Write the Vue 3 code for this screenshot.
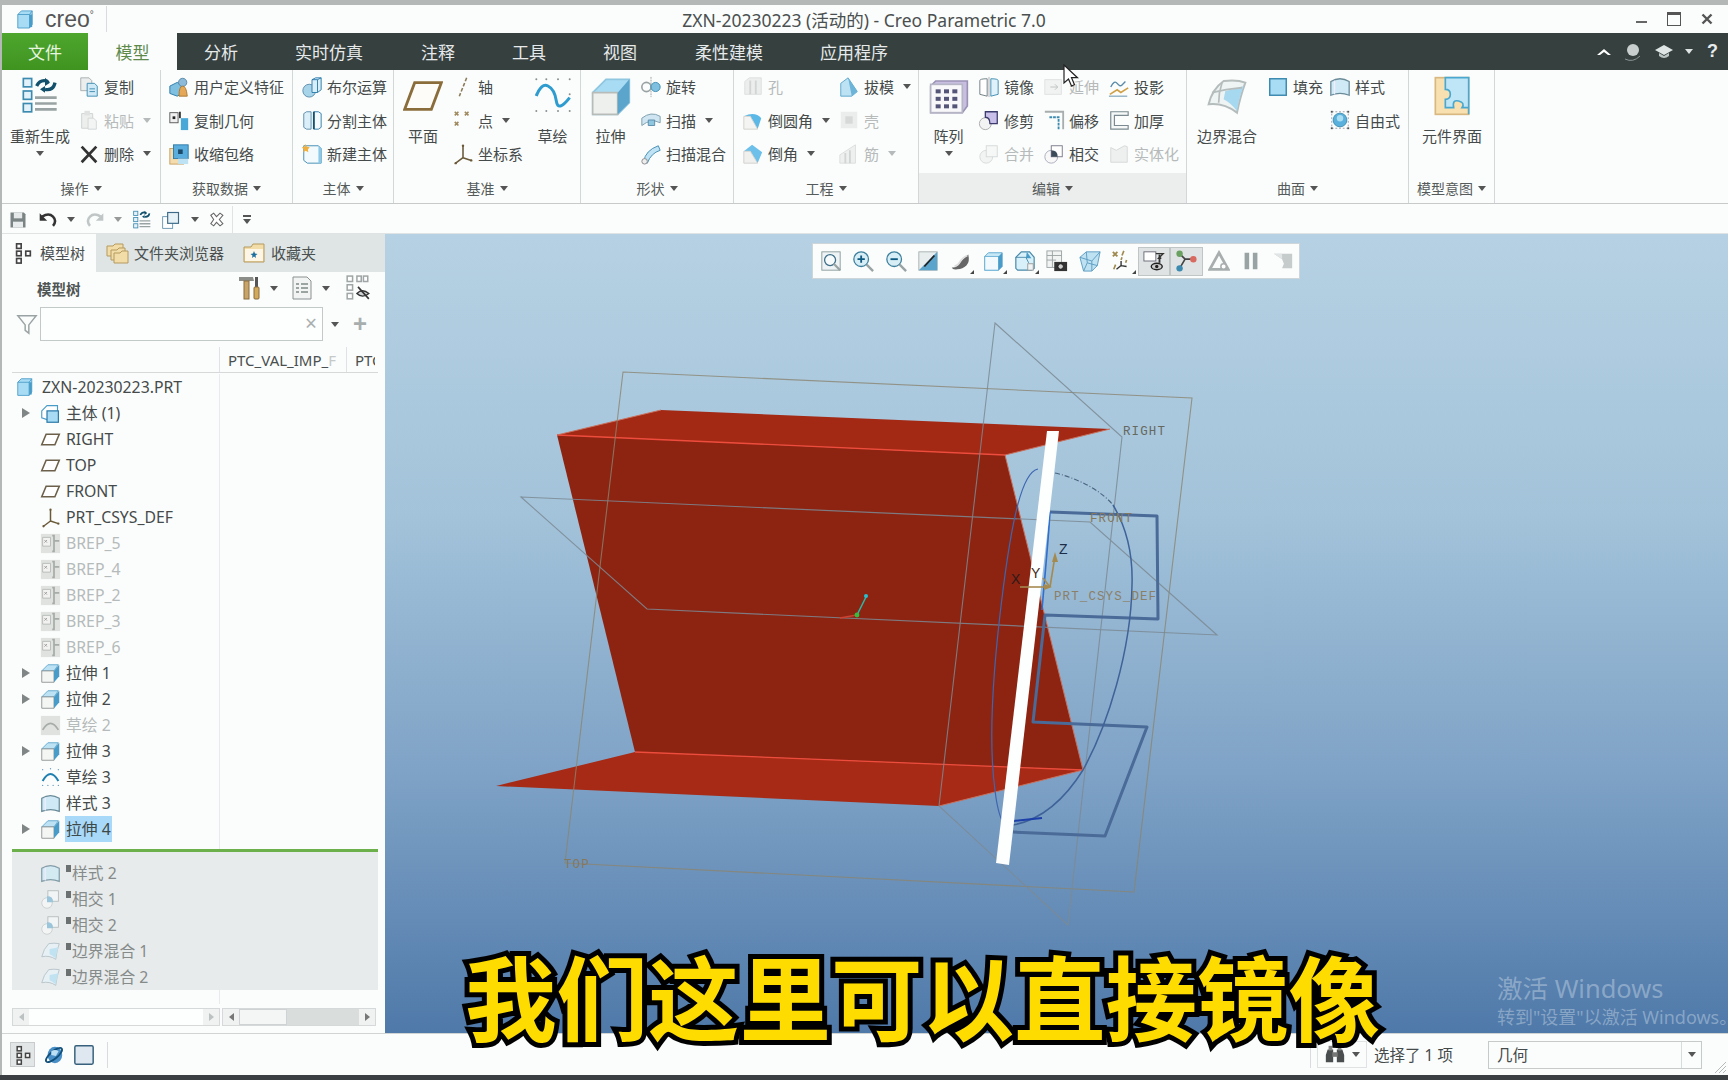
<template>
  <div class="window">
    <!-- title bar -->
    <div class="titlebar">
      <div class="logo">
        <svg class="logo-mark" viewBox="0 0 20 22" v-html="ic.part"></svg>
        <span class="logo-text">creo<sup>°</sup></span>
      </div>
      <div class="title">ZXN-20230223 (活动的) - Creo Parametric 7.0</div>
      <div class="winbtns">
        <span class="win-min"></span>
        <span class="win-max"></span>
        <svg class="win-close" viewBox="0 0 12 12"><path d="M1.5 1.5l9 9M10.5 1.5l-9 9" stroke="#555" stroke-width="2.4" /></svg>
      </div>
    </div>

    <!-- menu -->
    <div class="menubar">
      <div class="menu-file">文件</div>
      <div class="menu-active">模型</div>
      <div v-for="m in menus" :key="m.t" class="menu-item" :style="{ width: m.w + 'px' }">{{ m.t }}</div>
      <div class="menu-right">
        <svg width="16" height="10" viewBox="0 0 16 10"><path d="M1 8l7-6 7 6-3 0-4-3-4 3z" fill="#fff" /></svg>
        <svg width="20" height="22" viewBox="0 0 20 22"><circle cx="10" cy="9" r="6" fill="#c9cfcf" /><path d="M2 18q8 4 15-3" stroke="#8b9494" fill="none" /></svg>
        <svg width="20" height="16" viewBox="0 0 20 16"><path d="M10 1L19 6l-9 5-9-5z" fill="#dfe4e4" /><path d="M5 9v3q5 4 10 0V9l-5 3z" fill="#bcc4c4" /></svg>
        <i class="caret light"></i>
        <span class="help">?</span>
      </div>
    </div>

    <!-- ribbon -->
    <div class="ribbon">
      <div v-for="g in groups" :key="g.label" class="group" :class="{ shaded: g.shaded }" :style="{ width: g.w + 'px' }">
        <div class="group-body" :style="{ paddingLeft: (g.pl || 0) + 'px' }">
          <div v-for="(c, i) in g.cols" :key="i" class="col" :style="{ width: c.w + 'px' }">
            <div v-if="c.big" class="big">
              <svg class="big-icon" viewBox="0 0 24 24" v-html="ic[c.icon]"></svg>
              <span class="big-label">{{ c.big }}</span>
              <i v-if="c.arrow" class="caret big-caret"></i>
            </div>
            <template v-else>
              <div v-for="it in c.items" :key="it.t" class="small" :class="{ off: it.off }">
                <svg class="small-icon" viewBox="0 0 24 24" v-html="ic[it.icon]"></svg>
                <span>{{ it.t }}</span>
                <i v-if="it.arrow" class="caret small-caret"></i>
              </div>
            </template>
          </div>
        </div>
        <div class="group-foot">{{ g.label }}<i class="caret foot-caret"></i></div>
      </div>
    </div>

    <!-- quick access -->
    <div class="quick">
      <svg class="q-icon" viewBox="0 0 24 24" v-html="ic.save"></svg>
      <svg class="q-icon" viewBox="0 0 24 24" v-html="ic.undo"></svg>
      <i class="caret q-caret"></i>
      <svg class="q-icon faded" viewBox="0 0 24 24" v-html="ic.redo"></svg>
      <i class="caret q-caret faded"></i>
      <svg class="q-icon" viewBox="0 0 24 24" v-html="ic.regen"></svg>
      <svg class="q-icon" viewBox="0 0 24 24" v-html="ic.windows"></svg>
      <i class="caret q-caret"></i>
      <svg class="q-icon q-small" viewBox="0 0 24 24" v-html="ic.closewin"></svg>
      <span class="q-sep"></span>
      <span class="q-more"><i class="caret"></i></span>
    </div>

    <div class="main">
      <!-- model tree panel -->
      <aside class="panel">
        <div class="tabs">
          <div class="tab on"><svg viewBox="0 0 24 24" v-html="ic.tree"></svg>模型树</div>
          <div class="tab"><svg viewBox="0 0 24 24" v-html="ic.folders"></svg>文件夹浏览器</div>
          <div class="tab"><svg viewBox="0 0 24 24" v-html="ic.fav"></svg>收藏夹</div>
        </div>
        <div class="tree-head">
          <b>模型树</b>
          <svg class="th-a" viewBox="0 0 24 24" v-html="ic.tools"></svg>
          <i class="caret"></i>
          <svg class="th-b" viewBox="0 0 24 24" v-html="ic.list"></svg>
          <i class="caret"></i>
          <svg class="th-c" viewBox="0 0 24 24" v-html="ic.treehide"></svg>
        </div>
        <div class="filter">
          <svg viewBox="0 0 24 24"><path d="M2 3h20l-8 10v9l-4-3v-6z" fill="none" stroke="#9aa3a3" stroke-width="1.6" /></svg>
          <div class="filter-input"><span>×</span></div>
          <i class="caret"></i>
          <span class="plus">+</span>
        </div>
        <div class="thead">
          <div class="th-first"></div>
          <div class="th-col">PTC_VAL_IMP_<em>F</em></div>
          <div class="th-col last">PTC</div>
        </div>
        <div class="rows">
          <div v-for="r in rows" :key="r.t" class="row" :class="{ dim: r.dim, root: r.root }">
            <span class="expander"><i v-if="r.arrow"></i></span>
            <svg class="row-icon" viewBox="0 0 24 24" v-html="ic[r.icon]"></svg>
            <span class="row-text" :class="{ sel: r.sel }">{{ r.t }}</span>
          </div>
          <div class="greenline"></div>
          <div class="below">
            <div v-for="r in belowRows" :key="r.t" class="row">
              <span class="expander"></span>
              <svg class="row-icon ghost-soft" viewBox="0 0 24 24" v-html="ic[r.icon]"></svg>
              <i class="marker"></i>
              <span class="row-text">{{ r.t }}</span>
            </div>
          </div>
        </div>
        <div class="scrolls">
          <div class="sb sb-a"><span class="sb-btn"><i class="tri-l"></i></span><span class="sb-fill"></span><span class="sb-btn"><i class="tri-r"></i></span></div>
          <div class="sb sb-b"><span class="sb-btn"><i class="tri-l dark"></i></span><span class="sb-thumb"></span><span class="sb-fill gray"></span><span class="sb-btn"><i class="tri-r dark"></i></span></div>
        </div>
      </aside>

      <!-- graphics area -->
      <section class="viewport">
        <svg class="scene" viewBox="385 234 1343 799" preserveAspectRatio="none">
          <polygon points="557,435 661,410 1110,429 1005,455" fill="#a32915" />
          <polygon points="557,435 1005,455 1083,770 635,752" fill="#8d2412" />
          <polygon points="496,786 635,752 1083,770 939,806" fill="#a62a15" />
          <path d="M557 435L1005 455M635 752L1083 770" stroke="#ee4c3c" stroke-width="1.3" />
          <path d="M1005 455L1083 770L939 806M557 435L661 410M1110 429L1005 455" stroke="#c8705e" stroke-width="1" fill="none" />

          <g fill="none" stroke="#8a8471" stroke-width="1.1" opacity=".8">
            <polygon points="623,372 1192,398 1134,892 565,863" />
          </g>
          <g fill="none" stroke="#7c8a94" stroke-width="1.1" opacity=".85">
            <polygon points="995,323 1122,437 1068,925 939,806" />
            <polygon points="521,497 1090,522 1217,635 647,609" />
          </g>

          <g fill="none" stroke="#4a6a98" stroke-width="3" stroke-linejoin="round">
            <path d="M1050 512L1157 516L1158 619L1045 615L1033 722L1147 727L1105 836L1013 832" />
          </g>
          <path d="M1038 469C1022 472 1012 520 1003 590C994 660 988 740 995 790C997 808 1000 818 1004 824" fill="none" stroke="#3e66b0" stroke-width="1.2" />
          <path d="M1050 512C1048 545 1044 585 1042 610" fill="none" stroke="#2f6fd0" stroke-width="1.6" />
          <path d="M1055 473C1085 480 1105 495 1113 505" fill="none" stroke="#4a6480" stroke-width="1.1" stroke-dasharray="5 2 1 2" />
          <path d="M1113 505C1128 530 1133 555 1132 585C1131 650 1108 725 1083 770C1063 802 1040 820 1013 825" fill="none" stroke="#3f6298" stroke-width="1.5" />
          <path d="M1013 821L1042 818" stroke="#1c3fa8" stroke-width="2" />

          <polygon points="1047,431 1059,431 1009,865 996,863" fill="#fdfefe" />

          <g stroke="#a58a50" stroke-width="1.6" fill="none">
            <path d="M1050 587L1055 556" />
            <path d="M1050 587L1020 587" />
            <path d="M1050 587L1043 578" />
          </g>
          <path d="M1055 552l-3 10h6z" fill="#a58a50" />
          <path d="M1052 587l-8 -3v6z" fill="#a58a50" />

          <path d="M857 615L866 597" stroke="#2bb8a8" stroke-width="1.6" />
          <circle cx="866" cy="596" r="2" fill="#28c0d0" />
          <path d="M857 615L840 618" stroke="#d04030" stroke-width="1.6" />
          <circle cx="857" cy="615" r="2.4" fill="#2fc040" />

          <g class="datum-label">
            <text x="1123" y="435" fill="#66695f">RIGHT</text>
            <text x="1090" y="522" fill="#86785c">FRONT</text>
            <text x="1054" y="600" fill="#8a7f68">PRT_CSYS_DEF</text>
            <text x="564" y="868" fill="#86785c">TOP</text>
          </g>
          <g class="axis-label">
            <text x="1059" y="554" fill="#1d2d48">Z</text>
            <text x="1031" y="578" fill="#3d2a20">Y</text>
            <text x="1011" y="584" fill="#2d1a18">X</text>
          </g>
        </svg>

        <div class="float-bar">
          <div v-for="(b, i) in floatBtns" :key="i" class="fb" :class="{ pressed: b.on, corner: b.corner }">
            <svg viewBox="0 0 24 24" v-html="ic[b.icon]"></svg>
          </div>
        </div>

        <div class="watermark">
          <div class="wm-a">激活 Windows</div>
          <div class="wm-b">转到"设置"以激活 Windows。</div>
        </div>
      </section>
    </div>

    <!-- status bar -->
    <div class="status">
      <div class="st-left">
        <span class="st-toggle"><svg viewBox="0 0 24 24" v-html="ic.tree"></svg></span>
        <svg class="st-icon" viewBox="0 0 24 24" v-html="ic.globe"></svg>
        <svg class="st-icon" viewBox="0 0 24 24" v-html="ic.square"></svg>
        <span class="st-sep"></span>
      </div>
      <div class="st-right">
        <span class="st-sep"></span>
        <span class="st-find">
          <svg viewBox="0 0 24 24" v-html="ic.binoc"></svg>
          <i class="caret"></i>
        </span>
        <span class="st-text">选择了 1 项</span>
        <div class="st-select"><span>几何</span><b><i class="caret"></i></b></div>
        <svg class="grip" viewBox="0 0 12 12"><path d="M1 12L12 1M5 12l7-7M9 12l3-3" stroke="#b5baba" /></svg>
      </div>
    </div>

    <div class="bottom-edge"></div>

    <!-- overlays -->
    <div class="subtitle">我们这里可以直接镜像</div>
    <svg class="cursor" viewBox="0 0 16 24"><path d="M1 1v18l4.5-4 3 7 3-1.300-3-7h6z" fill="#fff" stroke="#222" stroke-width="1.200" /></svg>
  </div>
</template>

<script setup>
const ic = {
  part: '<path d="M2 6l4-4h12v15l-3 4H2z" fill="#a8dcf4" stroke="#4a9cc8"/><path d="M15 21V6l3-4M2 6h13" fill="none" stroke="#4a9cc8"/><rect x="15" y="6" width="3" height="14" fill="#4a9cc8"/>',
  regen: '<g fill="#e3f2fa" stroke="#3c8ab0"><rect x="2" y="1.500" width="5" height="5"/><rect x="2" y="9" width="5" height="5"/><rect x="2" y="16.500" width="5" height="5"/></g><path d="M10 6q2-4 6-3l1 1M21 4q-1 5-6 4" fill="none" stroke="#12506c" stroke-width="2"/><path d="M15 1l3 3-3 2zM15 6l-3 2 3 2z" fill="#12506c"/><path d="M9 13h13M9 16.500h13M9 20h13" stroke="#9aa3a3" stroke-width="1.600"/>',
  copy: '<path d="M3 2h9l3 3v11H3z" fill="#eceeee" stroke="#a5acac"/><path d="M10 8h8l3 3v11H10z" fill="#cfeaf6" stroke="#3c8ab0"/><path d="M12.500 14h6M12.500 17h6" stroke="#3c8ab0"/>',
  paste: '<path d="M4 5h12v16H4z" fill="#e2e4e2" stroke="#a8aeae"/><rect x="7" y="2" width="6" height="5" fill="#c9cccc"/><path d="M11 10h6l3 3v9h-9z" fill="#eef0f0" stroke="#b0b6b6"/>',
  del: '<path d="M4 4l16 17M20 4L4 21" stroke="#333" stroke-width="3"/>',
  udf: '<path d="M2 11l8-4 6 3v9l-6 3-8-3z" fill="#7fc0e0" stroke="#2b7aa8"/><circle cx="16" cy="7" r="4.500" fill="#8cbad8" stroke="#5585a5"/><path d="M12 22q0-11 4-11t5 11z" fill="#e4a858" stroke="#a87830"/>',
  copygeo: '<rect x="2" y="4" width="9" height="11" fill="#f0f0f0" stroke="#555"/><rect x="5" y="8" width="3" height="3" fill="#222"/><rect x="14" y="10" width="8" height="13" fill="#49a8d8"/><rect x="12" y="3" width="2" height="7" fill="#333"/>',
  shrink: '<rect x="2" y="6" width="15" height="17" fill="#f4dcae" stroke="#c8a060"/><rect x="6" y="2" width="16" height="15" fill="#59aede" stroke="#2b7aa8"/><rect x="11" y="7" width="5" height="5" fill="#1c4a68"/><rect x="11" y="17" width="11" height="6" fill="#bde2f4"/>',
  bool: '<circle cx="9" cy="16" r="7" fill="#a8d4ea" stroke="#5a8aa8"/><path d="M12 4l4-2h6v13l-4 3h-6z" fill="#d8eef8" stroke="#2b7aa8"/><path d="M18 4v14M12 4h6l4-2" fill="none" stroke="#2b7aa8"/>',
  split: '<path d="M3 5l3-2h5v19H6l-3-2z" fill="#dbeff8" stroke="#5a8aa8"/><path d="M14 3h5l3 2v15l-3 2h-5z" fill="#f4fafd" stroke="#2b7aa8"/><path d="M14 3v19" stroke="#12506c" stroke-width="2"/>',
  newbody: '<path d="M3 3h16l3 3v16H7l-4-3z" fill="#f2fafd" stroke="#3c8ab0"/><path d="M19 3v19h3V6z" fill="#8cc8e8"/><path d="M5 1l1.500 3 3 .5-2 2.500.5 3-3-1.500-2.500 1.500.5-3-2-2.500 3-.5z" fill="#f0b040"/>',
  plane: '<path d="M7 4h16l-6 16H1z" fill="#fdfcf8" stroke="#8a6d3b" stroke-width="1.700"/>',
  planesm: '<path d="M7 6h15l-5 12H2z" fill="#fff" stroke="#6d604a" stroke-width="1.800"/>',
  axis: '<path d="M16 2l-8 20" stroke="#8a7a58" stroke-width="1.700" stroke-dasharray="4 2"/>',
  point: '<path d="M3 3l4 4M7 3l-4 4M14 3l4 4M18 3l-4 4M3 14l4 4M7 14l-4 4" stroke="#a08a60" stroke-width="1.800"/>',
  csys: '<path d="M12 3v13M12 16l9 3M12 16l-8 6" stroke="#6a5a3a" stroke-width="1.700" fill="none"/><circle cx="12" cy="3" r="1.300" fill="#6a5a3a"/><circle cx="21" cy="19" r="1.300" fill="#6a5a3a"/><circle cx="4" cy="22" r="1.300" fill="#6a5a3a"/>',
  sketch: '<g fill="#8a9090"><circle cx="2" cy="2" r=".6"/><circle cx="8" cy="2" r=".6"/><circle cx="15" cy="2" r=".6"/><circle cx="22" cy="2" r=".6"/><circle cx="2" cy="11" r=".6"/><circle cx="22" cy="11" r=".6"/><circle cx="2" cy="21" r=".6"/><circle cx="8" cy="21" r=".6"/><circle cx="15" cy="21" r=".6"/><circle cx="22" cy="21" r=".6"/></g><path d="M2 12Q5 4 9 6T14 15T22 13" fill="none" stroke="#2f9cd0" stroke-width="1.800"/>',
  sketchsm: '<g fill="#6a9cc0"><circle cx="3" cy="3" r=".8"/><circle cx="12" cy="2" r=".8"/><circle cx="21" cy="3" r=".8"/><circle cx="3" cy="21" r=".8"/><circle cx="9" cy="21" r=".8"/><circle cx="15" cy="21" r=".8"/><circle cx="21" cy="21" r=".8"/></g><path d="M3 16Q12 0 21 16" fill="none" stroke="#1f7fb0" stroke-width="2.400"/>',
  extrude: '<path d="M1 10l8-8h14v14l-7 7H1z" fill="#a8dcf4" stroke="#8fc6e0"/><path d="M1 10h15v13H1z" fill="#eef0ee" stroke="#b8bcb8"/><path d="M16 10l7-8v14l-7 7z" fill="#5ba5cc"/>',
  extsm: '<path d="M2 9l7-7h12l-5 7z" fill="#bde2f4" stroke="#5ba5cc"/><path d="M2 9h14v13H2z" fill="#f4f6f4" stroke="#8a9090"/><path d="M16 9l6-7v13l-6 7z" fill="#4a9cc8"/>',
  revolve: '<path d="M12 1v22" stroke="#999" stroke-dasharray="2 1"/><ellipse cx="7" cy="12" rx="5" ry="5" fill="none" stroke="#9aa3a3" stroke-width="1.800"/><circle cx="17" cy="12" r="5" fill="#7fc0e0" stroke="#3c8ab0"/>',
  sweep: '<path d="M2 10q10-8 20-2v7q-10-5-20 3z" fill="#cfe6f2" stroke="#7a9aa8"/><path d="M9 12h7v6H9z" fill="#8fc6e0" stroke="#5a8aa8"/>',
  sweepblend: '<path d="M4 20Q6 8 20 3l2 5Q12 11 8 22z" fill="#bfe2f4" stroke="#3c8ab0"/><circle cx="5" cy="20" r="3" fill="#eee" stroke="#888"/>',
  hole: '<path d="M3 6l5-4h13v18H3z" fill="#dfe3e1" stroke="#c3c8c6"/><path d="M9 5v15M15 5v15" stroke="#b0b5b3" stroke-width="2"/>',
  draft: '<path d="M3 8l8-6 10 15-6 5H3z" fill="#bde2f4" stroke="#5ba5cc"/><path d="M11 2l10 15-6 5-4-20z" fill="#6cb4d8"/>',
  round: '<path d="M2 8Q14 2 21 10L17 22 9 8z" fill="#5cb8e6"/><path d="M2 8h7l8 14H2z" fill="#f4f4f2" stroke="#d0d0cc"/>',
  chamfer: '<path d="M2 9l9-7 11 8-5 12-8-13z" fill="#6cc0ea"/><path d="M2 9h7l8 13H2z" fill="#f0f0ee" stroke="#d0d0cc"/>',
  shell: '<rect x="3" y="3" width="18" height="18" fill="#dde1df"/><rect x="8" y="8" width="8" height="8" fill="#b8bdbb"/>',
  rib: '<path d="M2 22V13L19 2v20z" fill="#e4e7e5" stroke="#bfc4c2"/><path d="M8 22V11M13 22V8" stroke="#b0b5b3" stroke-width="2"/>',
  mirror: '<path d="M12 1v22" stroke="#aaa"/><path d="M10 3Q2 3 2 5v15l8 2z" fill="#fff" stroke="#6a7a80"/><path d="M14 3q8 0 8 2v15l-8 2z" fill="#dff1fa" stroke="#3c8ab0"/>',
  extend: '<rect x="2" y="4" width="18" height="16" fill="#e8ebe9" stroke="#c8cdcb"/><path d="M8 12h8M13 9l3 3-3 3" stroke="#8a9090" fill="none"/>',
  project: '<path d="M2 20l8-5 4 3 8-5" fill="none" stroke="#d0a048" stroke-width="1.800"/><path d="M3 12q4-8 7-4t5 2 4-4" fill="none" stroke="#5a8aa8" stroke-width="1.500"/><path d="M1 22h20" stroke="#5a8aa8"/>',
  trim: '<circle cx="8" cy="16" r="6.500" fill="#f3f3f3" stroke="#aaa"/><path d="M8 3h13v13H13q0-7-5-7z" fill="#c9c0ea" stroke="#3c3c6c" stroke-width="1.400"/>',
  offset: '<path d="M2 3h20v19" fill="none" stroke="#a8adad" stroke-width="2"/><path d="M7 9h10v13" fill="none" stroke="#3c8ab0" stroke-width="2" stroke-dasharray="3 1"/>',
  thicken: '<path d="M3 3h19v4H7v11h15v4H3z" fill="#f6f8f8" stroke="#7a8a90" stroke-width="1.300"/>',
  merge: '<circle cx="9" cy="15" r="7" fill="#eceeee" stroke="#b8bdbd"/><rect x="9" y="3" width="12" height="12" fill="#f2f4f4" stroke="#b8bdbd"/>',
  intersect: '<circle cx="9" cy="15" r="7" fill="#f8f8f8" stroke="#aab"/><rect x="9" y="3" width="12" height="12" fill="#fff" stroke="#778"/><path d="M9 8q7 0 7 7H9z" fill="#3a4a58"/>',
  solidify: '<path d="M3 5l6 3 9-5 3 1v17H3z" fill="#e4e7e5" stroke="#b5baba"/>',
  pattern: '<path d="M1 6l3-3h19v15l-3 4H1z" fill="#c8bfe0" stroke="#9a92b5"/><rect x="1" y="5" width="19" height="17" fill="#f8f8fa" stroke="#b5b5c5"/><g fill="#55557a"><rect x="4" y="8" width="3" height="2.400"/><rect x="9" y="8" width="3" height="2.400"/><rect x="14" y="8" width="3" height="2.400"/><rect x="4" y="12.500" width="3" height="2.400"/><rect x="9" y="12.500" width="3" height="2.400"/><rect x="14" y="12.500" width="3" height="2.400"/><rect x="4" y="17" width="3" height="2.400"/><rect x="9" y="17" width="3" height="2.400"/><rect x="14" y="17" width="3" height="2.400"/></g>',
  boundary: '<path d="M1 17Q3 8 10 3q8-1 13 1-3 8-5 18-8-6-17-5z" fill="#eef3f3" stroke="#b5bcbc" stroke-width="1.200"/><path d="M11 9q6-1 11-3-3 8-4 15-4-5-8-7z" fill="#a6d8f0"/><path d="M9 4Q7 10 7 16M3 10q8-2 18-3" stroke="#b5bcbc" fill="none"/>',
  fill: '<rect x="3" y="3" width="18" height="18" fill="#a8dcf4" stroke="#3c8ab0" stroke-width="1.600"/>',
  style: '<path d="M2 6q10-6 20 0v15q-10-4-20 0z" fill="#cfeaf6" stroke="#6a8a98" stroke-width="1.400"/><path d="M6 5v15" stroke="#eef" stroke-width="1.500"/>',
  freeform: '<rect x="3" y="3" width="18" height="18" fill="none" stroke="#99a" stroke-dasharray="2 2"/><circle cx="12" cy="12" r="7.500" fill="#59b0dc" stroke="#3c8ab0"/><circle cx="12" cy="10" r="3.500" fill="#aadcf2"/><g fill="#555"><rect x="2" y="2" width="2" height="2"/><rect x="20" y="2" width="2" height="2"/><rect x="2" y="20" width="2" height="2"/><rect x="20" y="20" width="2" height="2"/></g>',
  comp: '<rect x="2" y="1" width="20" height="22" fill="#f8e0b0" stroke="#d8b880"/><path d="M8 1h14v22H22V19h-4q2-3-2-4t-3 4H8v-5q3 0 3-3T8 8z" fill="#bfe6f6" stroke="#4aa8d0"/>',
  save: '<path d="M3 3h16l2 2v16H3z" fill="#7a8484"/><rect x="7" y="3" width="10" height="7" fill="#e4e8e8"/><rect x="6" y="14" width="12" height="7" fill="#e8ecec"/>',
  undo: '<path d="M5 8q8-5 13 0t0 11" fill="none" stroke="#333" stroke-width="3"/><path d="M2 4v9h9z" fill="#333"/>',
  redo: '<path d="M19 8q-8-5-13 0t0 11" fill="none" stroke="#9aa3a3" stroke-width="3"/><path d="M22 4v9h-9z" fill="#9aa3a3"/>',
  windows: '<rect x="2" y="8" width="12" height="14" fill="#fff" stroke="#5a8aa8"/><rect x="8" y="3" width="13" height="13" fill="#e6f2f8" stroke="#3c6a88" stroke-width="1.400"/>',
  closewin: '<path d="M4 6l4-3 4 5 5-5 4 3-5 6 5 6-4 3-5-5-4 5-4-3 4-6z" fill="#fff" stroke="#666" stroke-width="1.500"/>',
  tree: '<g fill="#fff" stroke="#444" stroke-width="1.800"><rect x="5" y="2" width="5" height="5"/><rect x="5" y="10" width="5" height="5"/><rect x="5" y="18" width="5" height="5"/><rect x="15" y="10" width="5" height="5"/></g>',
  folders: '<g fill="#f2dca8" stroke="#b59a60"><path d="M2 5h6l2-2h8v12H2z"/><path d="M6 9h6l2-2h6v12H6z"/><path d="M9 12h6l2-2h6v12H9z"/></g>',
  fav: '<path d="M2 6h7l2-3h11v18H2z" fill="#f2dca8" stroke="#b59a60"/><rect x="3" y="8" width="18" height="12" fill="#fdf6e6"/><path d="M12 10l1 2.500 2.500.5-2 1.500.5 2.500-2-1.500-2 1.500.5-2.500-2-1.500 2.500-.5z" fill="#1d6fa0"/>',
  tools: '<path d="M2 1h14l1 4H2z" fill="#8a8d88"/><rect x="7" y="5" width="5" height="18" fill="#c8a468" stroke="#8a6c3a"/><rect x="18" y="1" width="3" height="10" fill="#555"/><rect x="17" y="11" width="5" height="12" rx="1" fill="#d2aa5c" stroke="#8a6c3a"/>',
  list: '<path d="M3 1h14l4 4v18H3z" fill="#f2f4f4" stroke="#8a9090"/><g stroke="#808888" stroke-width="1.400"><path d="M6 8h3M11 8h7M6 12h3M11 12h7M6 16h3M11 16h7"/></g>',
  treehide: '<g fill="#fff" stroke="#a0a6a6" stroke-width="1.400"><rect x="2" y="1" width="5" height="5"/><rect x="2" y="9" width="5" height="5"/><rect x="2" y="17" width="5" height="5"/><rect x="11" y="1" width="4" height="5"/><rect x="17" y="1" width="4" height="5"/></g><path d="M11 17q5-5 11 0-6 5-11 0z" fill="#d0d6d6" stroke="#333" stroke-width="1.300"/><path d="M12 11l10 11" stroke="#333" stroke-width="1.500"/>',
  body: '<path d="M2 9l6-6h12v12l-2 4H8l-6-2z" fill="#fff" stroke="#4a9cc8" stroke-width="1.300"/><rect x="8" y="9" width="13" height="13" fill="#a8dcf4" stroke="#2b7aa8" stroke-width="1.400"/>',
  brep: '<rect x="1" y="1" width="22" height="22" fill="#dfe2df"/><path d="M3 5h9v10H3z" fill="#f2f2f0" stroke="#b5b8b5"/><path d="M14 3h2v18h-2M16 9h6" stroke="#a8aca8" stroke-width="2" fill="none"/><path d="M5 8l3 3M8 8l-3 3" stroke="#999"/>',
  sketchoff: '<rect x="1" y="1" width="22" height="22" fill="#dfe2df"/><path d="M3 17Q12 2 21 17" fill="none" stroke="#a8aca8" stroke-width="2"/>',
  intersectsm: '<circle cx="8" cy="16" r="6" fill="#f6f8f8" stroke="#c0c8c8"/><rect x="9" y="2" width="12" height="12" fill="#f5f8f8" stroke="#a8b0b0"/><path d="M8 8q7 0 7 7H8z" fill="#89bcd8"/>',
  boundsm: '<path d="M2 18Q4 9 10 3q6-1 12 0-3 8-4 18-7-5-16-3z" fill="#e6f2f8" stroke="#a8b8c0"/><path d="M11 9q5-1 10-2-2 7-3 13-4-4-7-5z" fill="#b8e0f2"/>',
  zoomfit: '<rect x="2" y="2" width="20" height="20" fill="#eef3f5" stroke="#8a9a9a"/><circle cx="11" cy="11" r="6" fill="#f8fbfc" stroke="#3d6f88" stroke-width="1.400"/><path d="M15 15l7 7" stroke="#9aa3a3" stroke-width="2.400"/>',
  zoomin: '<circle cx="10" cy="10" r="8" fill="#d8eef6" stroke="#3d7f9c" stroke-width="1.400"/><path d="M6 10h8M10 6v8" stroke="#0f5a80" stroke-width="2"/><path d="M16 16l7 7" stroke="#9aa3a3" stroke-width="2.600"/>',
  zoomout: '<circle cx="10" cy="10" r="8" fill="#d8eef6" stroke="#3d7f9c" stroke-width="1.400"/><path d="M6 10h8" stroke="#0f5a80" stroke-width="2"/><path d="M16 16l7 7" stroke="#9aa3a3" stroke-width="2.600"/>',
  repaint: '<rect x="2" y="2" width="20" height="20" fill="#e8eeee" stroke="#a8b0b0"/><path d="M22 2v20H2z" fill="#5ba5cc"/><path d="M8 18L19 6" stroke="#222" stroke-width="2"/>',
  shade: '<path d="M3 19q4 1 8-4t10-10q2 8-2 12t-10 4q-5 1-6-2z" fill="#666"/><path d="M6 18q4-1 6-5t8-7" stroke="#ddd" fill="none" stroke-width="2"/>',
  box: '<path d="M3 7l4-4h15v15l-4 4H3z" fill="#c8e8f6" stroke="#5ba5cc"/><rect x="3" y="7" width="15" height="15" fill="#f2fafd" stroke="#6ab0d4"/><path d="M18 7l4-4v15l-4 4z" fill="#4a9cc8"/>',
  view: '<path d="M2 8l6-6h9l5 6v12l-3 2H4l-2-2z" fill="#d8f0fa" stroke="#4a8aa8" stroke-width="1.300"/><path d="M14 2l5 7h-6z" fill="#4a9cc8"/><path d="M2 8h11l3 6" stroke="#4a8aa8" fill="none"/><rect x="15" y="15" width="6" height="7" fill="#f0f4f4" stroke="#999"/>',
  camera: '<rect x="1" y="1" width="16" height="18" fill="#f2f4f4" stroke="#9aa3a3"/><path d="M1 6h16M1 11h10M7 1v18" stroke="#9aa3a3"/><rect x="9" y="13" width="14" height="10" fill="#333"/><circle cx="16" cy="18" r="3" fill="#ccc" stroke="#111"/>',
  wire: '<path d="M1 8l7-6h15l-3 15-6 6H5z" fill="#bfe2f2" stroke="#5a9ac0"/><path d="M8 2l1 12 11 3M1 8l13 4v11M9 14l-4 9M14 12l9-10" stroke="#5a9ac0" fill="none" stroke-width="1"/>',
  datums: '<path d="M2 2l5 5M7 2l-5 5" stroke="#a08a50" stroke-width="2"/><path d="M14 1l-2 5" stroke="#a08a50" stroke-width="1.800"/><path d="M11 12v5M11 17l6 1M11 17l-5 4" stroke="#333" stroke-width="1.500"/><path d="M5 16l-2 5M12 8l-1 3M17 11l-1 3" stroke="#a08a50" stroke-width="1.800"/>',
  display: '<rect x="1" y="2" width="13" height="10" fill="#fff" stroke="#667"/><path d="M14 4h8l-5 5h3" stroke="#333" stroke-width="1.500" fill="none"/><rect x="17" y="5" width="2" height="9" fill="#333"/><ellipse cx="15" cy="18" rx="6" ry="3.500" fill="#ccc" stroke="#222" stroke-width="1.500"/><circle cx="15" cy="18" r="1.800" fill="#222"/>',
  annot: '<path d="M11 10L5 4M11 10L5 20M11 10h10" stroke="#444" stroke-width="1.800"/><circle cx="5" cy="4" r="3.500" fill="#6aa060"/><circle cx="5" cy="20" r="3.500" fill="#3c8ab0"/><circle cx="20" cy="10" r="3.500" fill="#d86a60"/>',
  triangle: '<path d="M12 3l10 18H2z" fill="none" stroke="#a8adad" stroke-width="3"/><circle cx="17" cy="18" r="3" fill="#fff" stroke="#a8adad" stroke-width="1.600"/>',
  pause: '<rect x="5" y="3" width="5" height="18" fill="#9aa3a3"/><rect x="14" y="3" width="5" height="18" fill="#9aa3a3"/>',
  flat: '<path d="M2 4h20v16H11l2-5-2-5z" fill="#c6cbcb"/><path d="M2 4h9v6z" fill="#e2e5e5"/>',
  globe: '<ellipse cx="13" cy="12" rx="8" ry="9" fill="#4a90c8"/><ellipse cx="12" cy="12" rx="11" ry="4" transform="rotate(-40 12 12)" fill="none" stroke="#12507c" stroke-width="2"/><path d="M9 8q4-3 8 0l-3 5-5-1z" fill="#bde0f4"/>',
  square: '<rect x="2" y="2" width="20" height="20" rx="1.500" fill="#dfe8f0" stroke="#36607c" stroke-width="1.600"/>',
  binoc: '<path d="M4 6h6v14H2V12zM14 6h6l2 6v8h-8z" fill="#4a4e4e"/><rect x="5" y="2" width="4" height="5" fill="#888"/><rect x="15" y="2" width="4" height="5" fill="#888"/><rect x="9" y="9" width="6" height="5" fill="#777"/>'
}

const menus = [
  { t: '分析', w: 88 }, { t: '实时仿真', w: 128 }, { t: '注释', w: 90 }, { t: '工具', w: 92 },
  { t: '视图', w: 90 }, { t: '柔性建模', w: 128 }, { t: '应用程序', w: 122 }
]

const groups = [
  { label: '操作', w: 159, cols: [
    { w: 76, big: '重新生成', icon: 'regen', arrow: true },
    { w: 83, items: [
      { t: '复制', icon: 'copy' },
      { t: '粘贴', icon: 'paste', off: true, arrow: true },
      { t: '删除', icon: 'del', arrow: true }
    ] }
  ] },
  { label: '获取数据', w: 132, pl: 7, cols: [
    { w: 125, items: [
      { t: '用户定义特征', icon: 'udf' },
      { t: '复制几何', icon: 'copygeo' },
      { t: '收缩包络', icon: 'shrink' }
    ] }
  ] },
  { label: '主体', w: 101, pl: 8, cols: [
    { w: 93, items: [
      { t: '布尔运算', icon: 'bool' },
      { t: '分割主体', icon: 'split' },
      { t: '新建主体', icon: 'newbody' }
    ] }
  ] },
  { label: '基准', w: 187, cols: [
    { w: 58, big: '平面', icon: 'plane' },
    { w: 72, items: [
      { t: '轴', icon: 'axis' },
      { t: '点', icon: 'point', arrow: true },
      { t: '坐标系', icon: 'csys' }
    ] },
    { w: 57, big: '草绘', icon: 'sketch' }
  ] },
  { label: '形状', w: 153, cols: [
    { w: 59, big: '拉伸', icon: 'extrude' },
    { w: 94, items: [
      { t: '旋转', icon: 'revolve' },
      { t: '扫描', icon: 'sweep', arrow: true },
      { t: '扫描混合', icon: 'sweepblend' }
    ] }
  ] },
  { label: '工程', w: 185, pl: 8, cols: [
    { w: 96, items: [
      { t: '孔', icon: 'hole', off: true },
      { t: '倒圆角', icon: 'round', arrow: true },
      { t: '倒角', icon: 'chamfer', arrow: true }
    ] },
    { w: 81, items: [
      { t: '拔模', icon: 'draft', arrow: true },
      { t: '壳', icon: 'shell', off: true },
      { t: '筋', icon: 'rib', off: true, arrow: true }
    ] }
  ] },
  { label: '编辑', w: 268, shaded: true, cols: [
    { w: 59, big: '阵列', icon: 'pattern', arrow: true },
    { w: 65, items: [
      { t: '镜像', icon: 'mirror' },
      { t: '修剪', icon: 'trim' },
      { t: '合并', icon: 'merge', off: true }
    ] },
    { w: 65, items: [
      { t: '延伸', icon: 'extend', off: true },
      { t: '偏移', icon: 'offset' },
      { t: '相交', icon: 'intersect' }
    ] },
    { w: 79, items: [
      { t: '投影', icon: 'project' },
      { t: '加厚', icon: 'thicken' },
      { t: '实体化', icon: 'solidify', off: true }
    ] }
  ] },
  { label: '曲面', w: 222, cols: [
    { w: 80, big: '边界混合', icon: 'boundary' },
    { w: 62, items: [{ t: '填充', icon: 'fill' }] },
    { w: 80, items: [
      { t: '样式', icon: 'style' },
      { t: '自由式', icon: 'freeform' }
    ] }
  ] },
  { label: '模型意图', w: 86, cols: [
    { w: 86, big: '元件界面', icon: 'comp' }
  ] }
]

const rows = [
  { t: 'ZXN-20230223.PRT', icon: 'part', root: true },
  { t: '主体 (1)', icon: 'body', arrow: true },
  { t: 'RIGHT', icon: 'planesm' },
  { t: 'TOP', icon: 'planesm' },
  { t: 'FRONT', icon: 'planesm' },
  { t: 'PRT_CSYS_DEF', icon: 'csys' },
  { t: 'BREP_5', icon: 'brep', dim: true },
  { t: 'BREP_4', icon: 'brep', dim: true },
  { t: 'BREP_2', icon: 'brep', dim: true },
  { t: 'BREP_3', icon: 'brep', dim: true },
  { t: 'BREP_6', icon: 'brep', dim: true },
  { t: '拉伸 1', icon: 'extsm', arrow: true },
  { t: '拉伸 2', icon: 'extsm', arrow: true },
  { t: '草绘 2', icon: 'sketchoff', dim: true },
  { t: '拉伸 3', icon: 'extsm', arrow: true },
  { t: '草绘 3', icon: 'sketchsm' },
  { t: '样式 3', icon: 'style' },
  { t: '拉伸 4', icon: 'extsm', arrow: true, sel: true }
]

const belowRows = [
  { t: '样式 2', icon: 'style' },
  { t: '相交 1', icon: 'intersectsm' },
  { t: '相交 2', icon: 'intersectsm' },
  { t: '边界混合 1', icon: 'boundsm' },
  { t: '边界混合 2', icon: 'boundsm' }
]

const floatBtns = [
  { icon: 'zoomfit' }, { icon: 'zoomin' }, { icon: 'zoomout' }, { icon: 'repaint' },
  { icon: 'shade', corner: true }, { icon: 'box', corner: true }, { icon: 'view', corner: true },
  { icon: 'camera' }, { icon: 'wire' }, { icon: 'datums', corner: true },
  { icon: 'display', on: true }, { icon: 'annot', on: true },
  { icon: 'triangle' }, { icon: 'pause' }, { icon: 'flat' }
]
</script>

<style scoped>
.window {
  position: relative;
  width: 1728px;
  height: 1080px;
  overflow: hidden;
  display: flex;
  flex-direction: column;
  padding: 5px 0 0 2px;
  box-sizing: border-box;
  background: #b4b9b8;
  font-family: "Noto Sans", "Noto Sans CJK SC", sans-serif;
  color: #454a4a;
}

/* title */
.titlebar {
  height: 28px;
  background: #fbfdfd;
  display: grid;
  grid-template-columns: 1fr auto 1fr;
  align-items: center;
}
.logo {
  width: 105px;
  height: 26px;
  display: flex;
  align-items: center;
  gap: 11px;
  padding-left: 14px;
  box-sizing: border-box;
  border-right: 1px solid #d8dcdc;
}
.logo-mark { width: 18px; height: 20px; flex: none; }
.logo-text { font-size: 23px; color: #555; line-height: 1; font-family: "Liberation Sans", sans-serif; white-space: nowrap; }
.logo-text sup { font-size: 10px; }
.title { font-size: 17.5px; color: #4a4f4f; margin-left: -2px; }
.winbtns {
  display: flex;
  justify-content: flex-end;
  align-items: center;
  gap: 20px;
  padding-right: 15px;
}
.win-min { width: 11px; height: 2px; background: #666; margin-top: 6px; }
.win-max { width: 12px; height: 10px; border: 1px solid #555; border-top-width: 3px; }
.win-close { width: 12px; height: 12px; }

/* menu */
.menubar {
  height: 37px;
  background: #36403f;
  display: flex;
  align-items: stretch;
  font-size: 17px;
  color: #e6eaea;
}
.menu-file {
  width: 86px;
  background: linear-gradient(#4ea62e, #3f9420);
  color: #e8f5e0;
  display: flex;
  align-items: center;
  justify-content: center;
}
.menu-active {
  width: 89px;
  background: #fbfdfd;
  color: #5d8a4a;
  display: flex;
  align-items: center;
  justify-content: center;
}
.menu-item { display: flex; align-items: center; justify-content: center; }
.menu-right {
  margin-left: auto;
  display: flex;
  align-items: center;
  gap: 11px;
  padding-right: 10px;
}
.help { font: bold 18px "Liberation Sans", sans-serif; color: #e8ecec; margin-left: 3px; }

/* ribbon */
.caret {
  display: inline-block;
  width: 0;
  height: 0;
  border-left: 4px solid transparent;
  border-right: 4px solid transparent;
  border-top: 5px solid #555;
}
.caret.light { border-top-color: #dfe4e4; }
.ribbon {
  height: 134px;
  background: #fbfdfc;
  display: flex;
  border-bottom: 1px solid #c6caca;
  box-sizing: border-box;
}
.group {
  display: flex;
  flex-direction: column;
  border-right: 1px solid #d3d7d7;
  box-sizing: border-box;
  flex: none;
}
.group.shaded .group-foot { background: #eceeee; }
.group-body {
  height: 103px;
  display: flex;
  box-sizing: border-box;
}
.group-foot {
  flex: 1;
  display: flex;
  align-items: center;
  justify-content: center;
  gap: 5px;
  font-size: 14px;
  color: #555a5a;
}
.foot-caret { margin-top: 1px; }
.col { flex: none; display: flex; flex-direction: column; }
.big {
  display: flex;
  flex-direction: column;
  align-items: center;
  padding-top: 6px;
  font-size: 15px;
  white-space: nowrap;
}
.big-icon { width: 40px; height: 40px; }
.big-label { margin-top: 10px; line-height: 20px; }
.big-caret { margin-top: 5px; }
.small {
  height: 33.5px;
  display: flex;
  align-items: center;
  font-size: 15px;
  white-space: nowrap;
}
.small-icon { width: 22px; height: 22px; margin-right: 4px; flex: none; }
.small-caret { margin-left: 9px; }
.small.off { color: #b6baba; }
.small.off .small-icon { opacity: .55; }
.small.off .caret { border-top-color: #b6baba; }

/* quick */
.quick {
  height: 30px;
  background: #fbfdfd;
  border-bottom: 1px solid #dfe3e3;
  box-sizing: border-box;
  display: flex;
  align-items: center;
  padding: 2px 0 0 6px;
}
.q-icon { width: 20px; height: 20px; margin-right: 9.5px; flex: none; }
.q-small { width: 17px; height: 17px; margin-right: 7px; }
.q-caret { margin-right: 9.5px; }
.faded { opacity: .6; }
.q-sep { width: 1px; height: 28px; background: #dfe3e3; }
.q-more { margin-left: 10px; border-top: 2px solid #555; line-height: 0; padding-top: 1px; }

/* layout */
.main { height: 799px; display: flex; }
.panel {
  width: 383px;
  flex: none;
  background: #fbfdfc;
  display: flex;
  flex-direction: column;
}
.tabs {
  height: 38px;
  padding-bottom: 1px;
  box-sizing: border-box;
  background: #dee5e4;
  display: flex;
  font-size: 15px;
}
.tab { display: flex; align-items: center; white-space: nowrap; color: #4a4f4f; }
.tab svg { width: 24px; height: 24px; margin-right: 5px; }
.tab.on { width: 94px; background: #fbfdfc; margin-bottom: -1px; padding: 0 0 1px 10px; box-sizing: border-box; }
.tab.on svg { width: 22px; height: 22px; margin-right: 6px; }
.tab:nth-child(2) { margin-left: 9px; margin-right: 18px; }
.tree-head {
  height: 35px;
  display: flex;
  align-items: center;
  padding: 0 0 3px 35px;
  box-sizing: border-box;
  font-size: 14.5px;
}
.tree-head b { width: 200px; color: #4f5454; }
.th-a { width: 24px; height: 26px; margin-right: 9px; flex: none; }
.th-b { width: 24px; height: 26px; margin: 0 8px 0 12px; flex: none; }
.th-c { width: 28px; height: 26px; margin-left: 14px; flex: none; }
.filter {
  height: 34px;
  display: flex;
  align-items: center;
  padding-left: 14px;
}
.filter > svg { width: 22px; height: 22px; margin-right: 2px; }
.filter-input {
  width: 283px;
  height: 34px;
  box-sizing: border-box;
  border: 1px solid #c3c8c8;
  background: #fdfefe;
  text-align: right;
  padding-right: 5px;
  color: #aab0b0;
  font-size: 21px;
  line-height: 30px;
}
.filter .caret { margin-left: 8px; }
.plus { margin-left: 14px; font: bold 24px/1 "Liberation Sans", sans-serif; color: #a8aeae; }
.thead {
  margin: 6px 7px 0 10px;
  height: 26px;
  display: flex;
  align-items: center;
  border-bottom: 1px solid #d5d9d9;
  font-size: 15px;
  box-sizing: border-box;
  overflow: hidden;
  color: #4a4f4f;
}
.th-first { width: 207px; height: 100%; border-right: 1px solid #dfe3e3; flex: none; }
.th-col {
  width: 127px;
  height: 100%;
  padding-left: 8px;
  box-sizing: border-box;
  border-right: 1px solid #dfe3e3;
  white-space: nowrap;
  overflow: hidden;
  flex: none;
  line-height: 27px;
}
.th-col em { font-style: normal; color: #c5c9c9; }
.th-col.last { border: 0; width: 28px; }
.rows {
  margin: 1px 7px 0 10px;
  height: 630px;
  box-sizing: border-box;
  background: linear-gradient(#e8ebeb, #e8ebeb) 207px 0 / 1px 100% no-repeat;
}
.row {
  height: 26px;
  display: flex;
  align-items: center;
  font-size: 15.8px;
  white-space: nowrap;
}
.row.root { margin-left: -24px; }
.expander { width: 28px; flex: none; display: flex; padding-left: 10px; box-sizing: border-box; }
.expander i {
  border-top: 5px solid transparent;
  border-bottom: 5px solid transparent;
  border-left: 8px solid #808686;
}
.row-icon { width: 21px; height: 21px; flex: none; margin-right: 4px; }
.row.dim { color: #b5baba; }
.row-text { padding: 0 1px; line-height: 26px; }
.row-text.sel { background: #a9d9f8; color: #3d4848; }
.greenline { height: 2.5px; background: #6bb04a; margin-top: 7px; }
.below {
  background: #e8ebeb;
  padding-top: 8.5px;
  height: 138.5px;
  box-sizing: border-box;
  color: #858a8a;
}
.below .row-icon { margin-right: 5px; }
.ghost-soft { opacity: .8; }
.marker { width: 5px; height: 7px; background: #6b7070; margin: -10px 0 0 0; flex: none; }
.scrolls {
  margin: 0 7px 0 10px;
  padding-top: 4px;
  display: flex;
  gap: 2px;
}
.sb {
  height: 18px;
  display: flex;
  border: 1px solid #d5d9d9;
  box-sizing: border-box;
  background: #fdfefe;
}
.sb-a { width: 208px; }
.sb-b { width: 154px; }
.sb-btn {
  width: 16px;
  flex: none;
  display: flex;
  align-items: center;
  justify-content: center;
  background: #f0f2f2;
}
.sb-fill { flex: 1; }
.sb-fill.gray { background: #d9dddc; }
.sb-thumb { width: 48px; background: #f4f6f6; border: 1px solid #cfd3d3; box-sizing: border-box; }
.tri-l, .tri-r { border-top: 4px solid transparent; border-bottom: 4px solid transparent; }
.tri-l { border-right: 5px solid #bcc1c1; }
.tri-r { border-left: 5px solid #bcc1c1; }
.tri-l.dark { border-right-color: #777; }
.tri-r.dark { border-left-color: #777; }

/* viewport */
.viewport {
  flex: 1;
  position: relative;
  overflow: hidden;
  background: linear-gradient(#b6d1e3, #a3c3da 35%, #7ea2c6 68%, #4f79a9);
}
.scene { display: block; width: 100%; height: 100%; }
.datum-label text {
  font: 12.5px "Liberation Mono", monospace;
  letter-spacing: 1.1px;
}
.axis-label text { font: 14px "Liberation Sans", sans-serif; }
.float-bar {
  position: absolute;
  left: 427px;
  top: 9px;
  width: 488px;
  height: 36px;
  box-sizing: border-box;
  background: #fbfdfd;
  border: 1px solid #cfd6da;
  display: flex;
  align-items: center;
  padding-left: 2px;
}
.fb {
  position: relative;
  width: 32.3px;
  height: 29px;
  flex: none;
  display: flex;
  align-items: center;
  justify-content: center;
  box-sizing: border-box;
}
.fb svg { width: 22px; height: 22px; }
.fb.pressed { background: #dfe3e3; border: 1px solid #c0c5c5; }
.fb.corner::after {
  content: "";
  position: absolute;
  right: 2px;
  bottom: 2px;
  border-left: 4px solid transparent;
  border-bottom: 4px solid #444;
}
.watermark {
  position: absolute;
  left: 1112px;
  top: 738px;
  color: rgba(205, 218, 232, .45);
  white-space: nowrap;
}
.wm-a { font-size: 25.5px; line-height: 32px; }
.wm-b { font-size: 18px; line-height: 26px; }

/* status */
.status {
  height: 42px;
  background: #fbfdfd;
  border-top: 1px solid #d0d4d4;
  box-sizing: border-box;
  display: flex;
  justify-content: space-between;
  font-size: 15.5px;
}
.st-left { display: flex; align-items: center; padding-left: 8px; }
.st-toggle {
  width: 25px;
  height: 25px;
  background: #e3e6e6;
  border: 1px solid #c8cccc;
  box-sizing: border-box;
  display: flex;
  align-items: center;
  justify-content: center;
}
.st-toggle svg { width: 20px; height: 20px; }
.st-icon { width: 22px; height: 22px; margin-left: 8px; }
.st-sep { width: 1px; height: 26px; background: #d8dcdc; }
.st-left .st-sep { margin-left: 12px; }
.st-right { display: flex; align-items: center; position: relative; padding-right: 26px; }
.st-find {
  width: 50px;
  height: 27px;
  margin-left: 6px;
  display: flex;
  align-items: center;
  gap: 6px;
  padding-left: 6px;
  box-sizing: border-box;
  border: 1px solid #e0e3e3;
}
.st-find svg { width: 22px; height: 22px; }
.st-text { margin-left: 7px; width: 114px; white-space: nowrap; }
.st-select {
  width: 214px;
  height: 28px;
  box-sizing: border-box;
  border: 1px solid #c6caca;
  display: flex;
  align-items: center;
  padding-left: 8px;
}
.st-select span { flex: 1; }
.st-select b {
  width: 19px;
  height: 100%;
  border-left: 1px solid #d8dcdc;
  display: flex;
  align-items: center;
  justify-content: center;
}
.grip { position: absolute; right: 2px; bottom: 2px; width: 12px; height: 12px; }
.bottom-edge { flex: 1; background: #3c3f41; margin-left: -2px; }

/* overlays */
.subtitle {
  position: absolute;
  left: 465px;
  top: 934px;
  font-family: "Noto Sans CJK SC", sans-serif;
  font-weight: 700;
  font-size: 91.5px;
  line-height: 120px;
  white-space: nowrap;
  color: #ffdc00;
  -webkit-text-stroke: 10px #000;
  paint-order: stroke fill;
}
.cursor { position: absolute; left: 1063px; top: 64px; width: 16px; height: 24px; }
</style>

<style>
html, body { margin: 0; overflow: hidden; }
</style>
